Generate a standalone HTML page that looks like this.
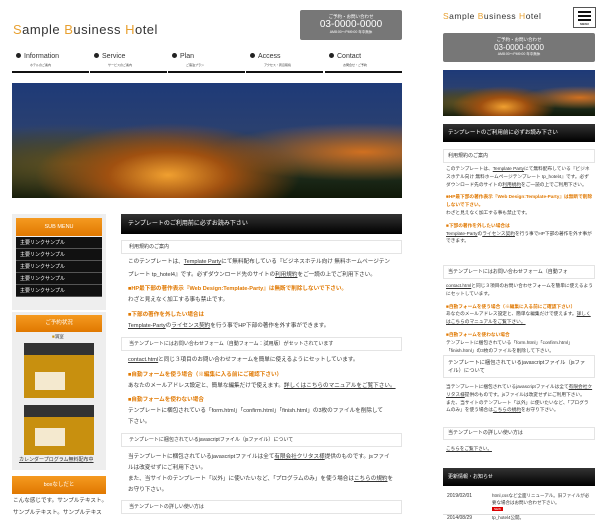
<!DOCTYPE html>
<html><head><meta charset="utf-8"><style>
*{margin:0;padding:0;box-sizing:border-box}
body{width:600px;height:521px;overflow:hidden;background:#fff;font-family:"Liberation Sans","Noto Sans CJK JP",sans-serif;color:#333;position:relative}
.a{position:absolute}
.t{font-size:5.6px;white-space:nowrap;line-height:1}
.o{color:#e07800;font-weight:bold}
u{text-decoration:underline}
.logo{font-size:13px;letter-spacing:.5px;color:#333}
.logo b{color:#e8a030;font-weight:normal}
.tel{background:#777;color:#fff;text-align:center;border-radius:2px}
.bar{background:linear-gradient(#333,#000);color:#fff}
.box{border:1px solid #e4e4e4;background:#fff}
.img{background:radial-gradient(ellipse at 40% 80%,#f0a030 0%,#a05010 18%,transparent 40%),radial-gradient(ellipse at 90% 60%,#d07020 0%,transparent 30%),radial-gradient(ellipse at 15% 70%,#605020 0%,transparent 35%),linear-gradient(#1e3a78,#2a4070 40%,#203020 75%,#101808)}
.nav div{position:absolute;top:0;width:77px;height:23px;border-bottom:2px solid #111}
.nav span{position:absolute;left:4px;top:3px;font-size:7px}
.nav span:before{content:"";display:inline-block;width:5px;height:5px;border-radius:50%;background:#222;margin-right:3px}
.nav i{position:absolute;left:18px;top:13px;font-size:3px;font-style:normal}
.sl{background:#111;color:#fff;font-size:5px;height:12px;line-height:12px;padding-left:4px;border-bottom:1px solid #555}
.oh{background:linear-gradient(#f59a20,#e07800);color:#fff;text-align:center;font-size:5.5px}
.cal{background:#c8900f}
.m{font-size:4.7px;line-height:7.8px;width:147px;left:446px}
.m p{margin-bottom:5px}
</style></head><body>
<!-- desktop -->
<div class="a logo" style="left:13px;top:22px"><b>S</b>ample <b>B</b>usiness <b>H</b>otel</div>
<div class="a tel" style="left:300px;top:10px;width:102px;height:30px">
<div style="font-size:4.5px;margin-top:4px">ご予約・お問い合わせ</div>
<div style="font-size:10px;line-height:10px">03-0000-0000</div>
<div style="font-size:3.5px">AM8:00〜PM9:00 年中無休</div></div>
<div class="a nav" style="left:12px;top:50px;width:390px;height:25px">
<div style="left:0"><span>Information</span><i>ホテルのご案内</i></div>
<div style="left:78px"><span>Service</span><i>サービスのご案内</i></div>
<div style="left:156px"><span>Plan</span><i>ご宿泊プラン</i></div>
<div style="left:234px"><span>Access</span><i>アクセス・周辺環境</i></div>
<div style="left:313px"><span>Contact</span><i>お問合せ・ご予約</i></div>
</div>
<div class="a img" style="left:12px;top:83px;width:390px;height:115px"></div>

<div class="a" style="left:12px;top:214px;width:94px;height:96px;background:#eee"></div>
<div class="a oh" style="left:16px;top:218px;width:86px;height:18px;line-height:18px">SUB MENU</div>
<div class="a" style="left:16px;top:237px;width:86px">
<div class="sl">主要リンクサンプル</div><div class="sl">主要リンクサンプル</div><div class="sl">主要リンクサンプル</div><div class="sl">主要リンクサンプル</div><div class="sl">主要リンクサンプル</div></div>
<div class="a" style="left:12px;top:312px;width:94px;height:158px;background:#eee"></div>
<div class="a oh" style="left:16px;top:315px;width:86px;height:17px;line-height:17px">ご予約状況</div>
<div class="a t" style="left:52px;top:335px;font-size:4.5px"><span style="color:#c8900f">■</span>満室</div>
<div class="a cal" style="left:24px;top:343px;width:70px;height:55px;border-top:12px solid #333"></div>
<div class="a cal" style="left:24px;top:405px;width:70px;height:50px;border-top:12px solid #333"></div>
<div class="a" style="left:35px;top:372px;width:30px;height:18px;background:#fff;opacity:.8"></div>
<div class="a" style="left:35px;top:428px;width:30px;height:18px;background:#fff;opacity:.8"></div>
<div class="a t" style="left:19px;top:458px;font-size:5px"><u>カレンダープログラム無料配布中</u></div>
<div class="a oh" style="left:12px;top:476px;width:94px;height:18px;line-height:18px">boxなしだと</div>
<div class="a t" style="left:13px;top:499px">こんな感じです。サンプルテキスト。</div>
<div class="a t" style="left:13px;top:511px">サンプルテキスト。サンプルテキス</div>

<div class="a bar" style="left:121px;top:214px;width:281px;height:20px;font-size:6px;line-height:20px;padding-left:7px">テンプレートのご利用前に必ずお読み下さい</div>
<div class="a box t" style="left:121px;top:240px;width:281px;height:14px;line-height:12px;padding-left:7px;font-size:5px">利用規約のご案内</div>
<div class="a t" style="left:128px;top:260px">このテンプレートは、<u>Template Party</u>にて無料配布している『ビジネスホテル向け 無料ホームページテン</div>
<div class="a t" style="left:128px;top:273px">プレート tp_hotel4』です。必ずダウンロード先のサイトの<u>利用規約</u>をご一読の上でご利用下さい。</div>
<div class="a t o" style="left:128px;top:287px">■HP最下部の著作表示『Web Design:Template-Party』は無断で削除しないで下さい。</div>
<div class="a t" style="left:128px;top:298px">わざと見えなく加工する事も禁止です。</div>
<div class="a t o" style="left:128px;top:313px">■下部の著作を外したい場合は</div>
<div class="a t" style="left:128px;top:324px"><u>Template-Party</u>の<u>ライセンス契約</u>を行う事でHP下部の著作を外す事ができます。</div>
<div class="a box t" style="left:121px;top:337px;width:281px;height:14px;line-height:12px;padding-left:7px;font-size:5px">当テンプレートにはお問い合わせフォーム（自動フォーム：試用版）がセットされています</div>
<div class="a t" style="left:128px;top:358px"><u>contact.html</u>と同じ３項目のお問い合わせフォームを簡単に使えるようにセットしています。</div>
<div class="a t o" style="left:128px;top:373px">■自動フォームを使う場合（※編集に入る前にご確認下さい）</div>
<div class="a t" style="left:128px;top:384px">あなたのメールアドレス設定と、簡単な編集だけで使えます。<u>詳しくはこちらのマニュアルをご覧下さい。</u></div>
<div class="a t o" style="left:128px;top:398px">■自動フォームを使わない場合</div>
<div class="a t" style="left:128px;top:409px">テンプレートに梱包されている「form.html」「confirm.html」「finish.html」の3枚のファイルを削除して</div>
<div class="a t" style="left:128px;top:420px">下さい。</div>
<div class="a box t" style="left:121px;top:433px;width:281px;height:14px;line-height:12px;padding-left:7px;font-size:5px">テンプレートに梱包されているjavascriptファイル（jsファイル）について</div>
<div class="a t" style="left:128px;top:455px">当テンプレートに梱包されているjavascriptファイルは全て<u>有限会社クリタス様</u>提供のものです。jsファイ</div>
<div class="a t" style="left:128px;top:466px">ルは改変せずにご利用下さい。</div>
<div class="a t" style="left:128px;top:477px">また、当サイトのテンプレート「以外」に使いたいなど、「プログラムのみ」を使う場合は<u>こちらの規約</u>を</div>
<div class="a t" style="left:128px;top:488px">お守り下さい。</div>
<div class="a box t" style="left:121px;top:500px;width:281px;height:14px;line-height:12px;padding-left:7px;font-size:5px">当テンプレートの詳しい使い方は</div>

<!-- mobile -->
<div class="a logo" style="left:443px;top:11px;font-size:8.5px"><b>S</b>ample <b>B</b>usiness <b>H</b>otel</div>
<div class="a" style="left:573px;top:7px;width:23px;height:21px;border:1px solid #555;background:#fff">
<div style="margin:3px 4px 0;height:2px;background:#111"></div><div style="margin:2px 4px 0;height:2px;background:#111"></div><div style="margin:2px 4px 0;height:2px;background:#111"></div>
<div style="font-size:3px;text-align:center;margin-top:1px;font-weight:bold">MENU</div></div>
<div class="a tel" style="left:443px;top:33px;width:152px;height:29px">
<div style="font-size:4.5px;margin-top:4px">ご予約・お問い合わせ</div>
<div style="font-size:8px;line-height:9px">03-0000-0000</div>
<div style="font-size:3.5px">AM8:00〜PM9:00 年中無休</div></div>
<div class="a img" style="left:443px;top:70px;width:152px;height:46px"></div>
<div class="a bar" style="left:443px;top:124px;width:152px;height:18px;font-size:5.5px;line-height:18px;padding-left:5px">テンプレートのご利用前に必ずお読み下さい</div>
<div class="a box t" style="left:443px;top:149px;width:152px;height:14px;line-height:12px;padding-left:4px;font-size:5px">利用規約のご案内</div>
<div class="a m" style="top:165px">
<p>このテンプレートは、<u>Template Party</u>にて無料配布している『ビジネスホテル向け 無料ホームページテンプレート tp_hotel4』です。必ずダウンロード先のサイトの<u>利用規約</u>をご一読の上でご利用下さい。</p>
<p><span class="o">■HP最下部の著作表示『Web Design:Template-Party』は無断で削除しないで下さい。</span><br>わざと見えなく加工する事も禁止です。</p>
<p><span class="o">■下部の著作を外したい場合は</span><br><u>Template-Party</u>の<u>ライセンス契約</u>を行う事でHP下部の著作を外す事ができます。</p></div>
<div class="a box t" style="left:443px;top:265px;width:152px;height:14px;line-height:12px;padding-left:4px;font-size:5px;overflow:hidden">当テンプレートにはお問い合わせフォーム（自動フォ</div>
<div class="a m" style="top:282px">
<p><u>contact.html</u>と同じ３項目のお問い合わせフォームを簡単に使えるようにセットしています。</p>
<p><span class="o">■自動フォームを使う場合（※編集に入る前にご確認下さい）</span><br>あなたのメールアドレス設定と、簡単な編集だけで使えます。<u>詳しくはこちらのマニュアルをご覧下さい。</u></p>
<p><span class="o">■自動フォームを使わない場合</span><br>テンプレートに梱包されている「form.html」「confirm.html」「finish.html」の3枚のファイルを削除して下さい。</p></div>
<div class="a box" style="left:443px;top:355px;width:152px;height:23px;padding:3px 4px;font-size:5.3px;line-height:8px">テンプレートに梱包されているjavascriptファイル（jsファイル）について</div>
<div class="a m" style="top:383px">
当テンプレートに梱包されているjavascriptファイルは全て<u>有限会社クリタス様</u>提供のものです。jsファイルは改変せずにご利用下さい。<br>また、当サイトのテンプレート「以外」に使いたいなど、「プログラムのみ」を使う場合は<u>こちらの規約</u>をお守り下さい。</div>
<div class="a box t" style="left:443px;top:427px;width:152px;height:13px;line-height:11px;padding-left:4px;font-size:5px">当テンプレートの詳しい使い方は</div>
<div class="a t" style="left:446px;top:447px;font-size:4.6px"><u>こちらをご覧下さい。</u></div>
<div class="a bar" style="left:443px;top:468px;width:152px;height:18px;font-size:5px;line-height:18px;padding-left:5px">更新情報・お知らせ</div>
<div class="a t" style="left:447px;top:494px;font-size:5px">2019/02/01</div>
<div style="font-size:4.5px;line-height:6.5px;width:100px;left:492px;top:493px" class="a">html,cssなど全面リニューアル。旧ファイルが必要な場合はお問い合わせ下さい。<br><span style="background:#d00;color:#fff;font-size:3px;padding:0 2px">NEW</span></div>
<div class="a" style="left:443px;top:514px;width:152px;border-top:1px solid #ddd"></div>
<div class="a t" style="left:447px;top:516px;font-size:5px">2014/08/29</div>
<div class="a t" style="left:492px;top:516px;font-size:4.5px">tp_hotel4公開。</div>
</body></html>
